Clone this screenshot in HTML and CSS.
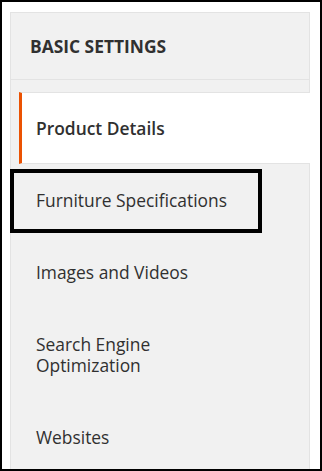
FILE: index.html
```html
<!DOCTYPE html>
<html>
<head>
<meta charset="utf-8">
<link rel="stylesheet" href="styles.css">
</head>
<body>
<div class="frame">
  <div class="nav">
    <div class="nav-title">BASIC SETTINGS</div>
    <ul class="nav-items">
      <li class="nav-item active">Product Details</li>
      <li class="nav-item">Furniture Specifications</li>
      <li class="nav-item">Images and Videos</li>
      <li class="nav-item">Search Engine<br>Optimization</li>
      <li class="nav-item">Websites</li>
    </ul>
  </div>
  <div class="callout"></div>
</div>
</body>
</html>
```
FILE: styles.css
```css
html, body {
  margin: 0;
  padding: 0;
  background: #fff;
}
.frame {
  position: relative;
  box-sizing: border-box;
  width: 322px;
  height: 471px;
  border: 2px solid #000;
  padding: 10px 0 0 8px;
  overflow: hidden;
  background: #fff;
  font-family: "Open Sans", "Liberation Sans", sans-serif;
  color: #303030;
}
.nav {
  box-sizing: border-box;
  width: 300px;
  height: 470px;
  background: #f1f1f1;
  border: 1px solid #e3e3e3;
}
.nav-title {
  height: 66px;
  display: flex;
  align-items: center;
  padding: 0 19px;
  border-bottom: 1px solid #e3e3e3;
  font-size: 17.4px;
  font-weight: 700;
}
.nav-items {
  list-style: none;
  margin: 0;
  padding: 12px 0 0 0;
}
.nav-item {
  margin-left: 8px;
  border-left: 3px solid transparent;
  border-top: 1px solid transparent;
  border-bottom: 1px solid transparent;
  padding: 24.5px 14px;
  font-size: 17.4px;
  line-height: 21px;
  font-weight: 400;
}
.nav-item.active {
  background: #fff;
  border-left-color: #eb5202;
  border-top-color: #e3e3e3;
  border-bottom-color: #e3e3e3;
  margin-right: -1px;
  font-weight: 600;
}
.callout {
  position: absolute;
  left: 8px;
  top: 167px;
  width: 252px;
  height: 64px;
  box-sizing: border-box;
  border: 4px solid #000;
}
```
